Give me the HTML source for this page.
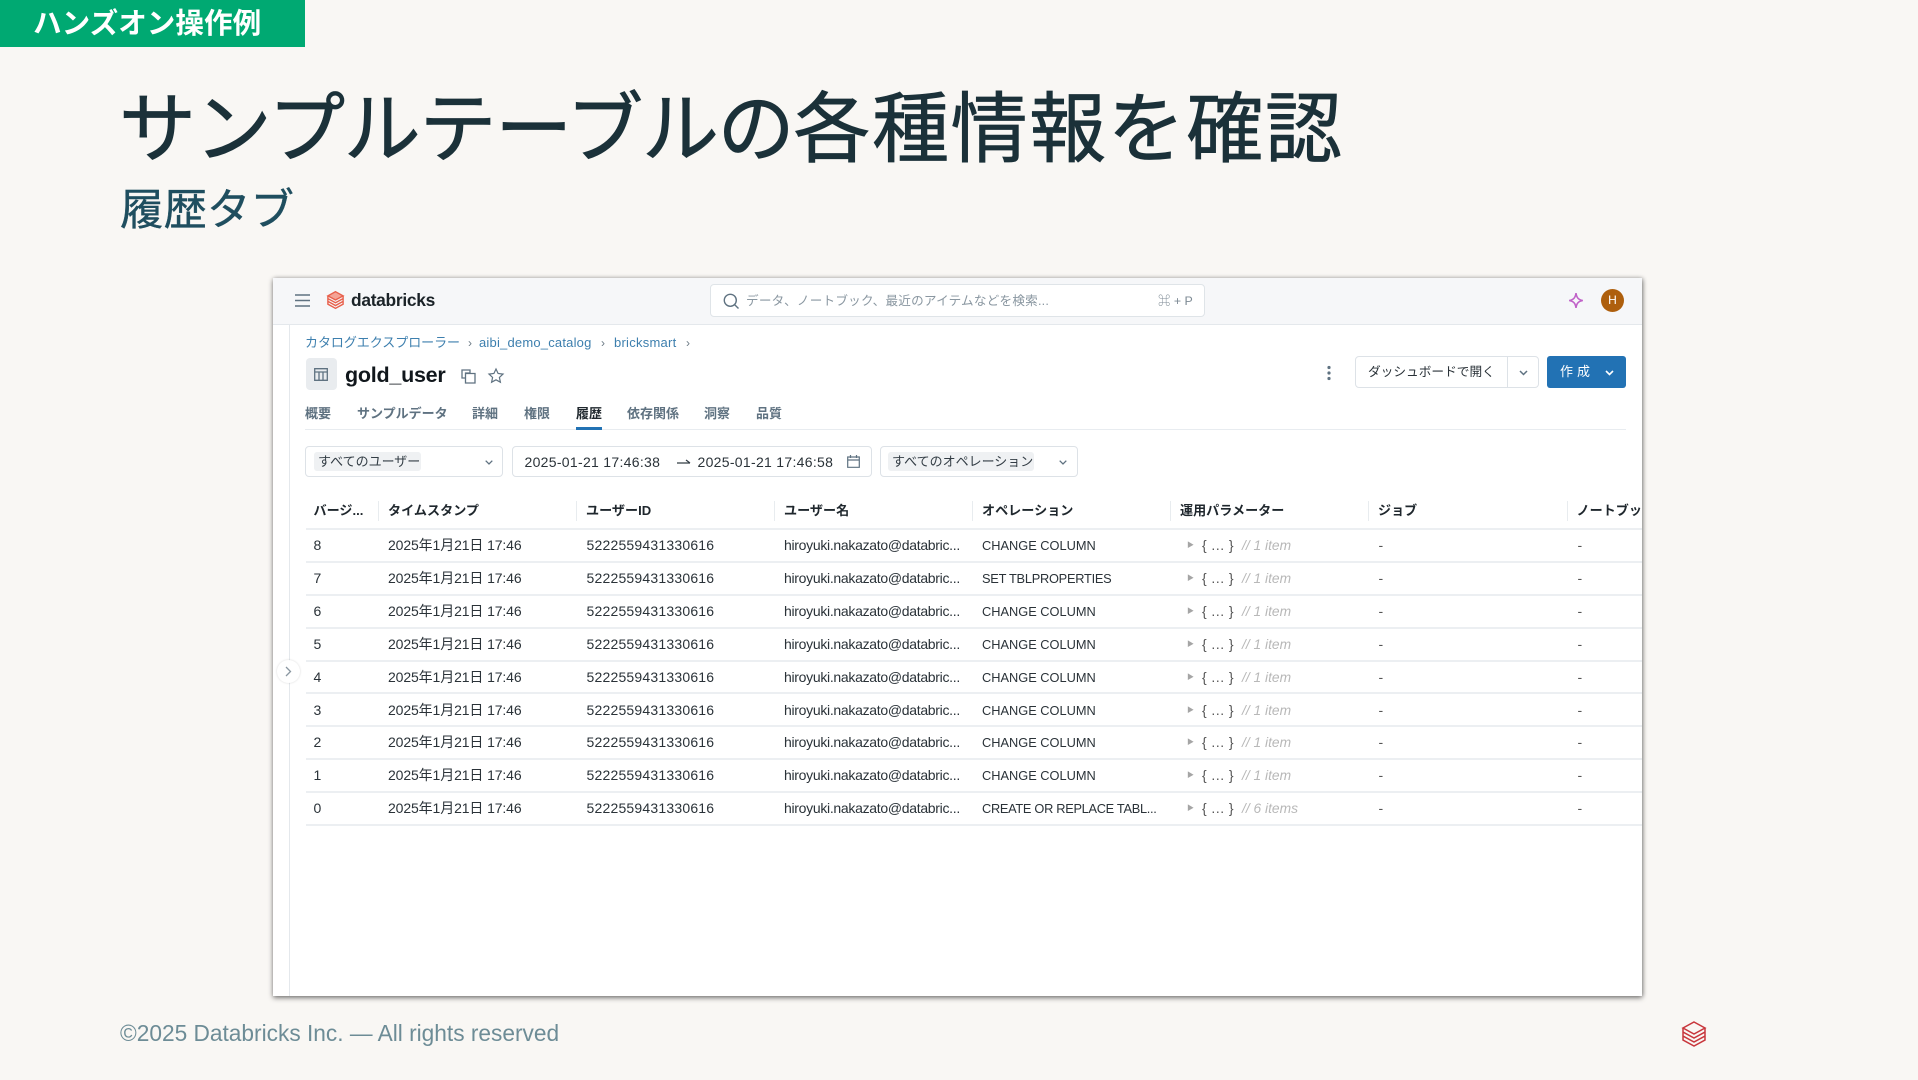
<!DOCTYPE html>
<html lang="ja">
<head>
<meta charset="utf-8">
<title>サンプルテーブルの各種情報を確認</title>
<style>
html,body{margin:0;padding:0;width:1918px;height:1080px;overflow:hidden;background:#f9f7f4;font-family:"Liberation Sans","Noto Sans CJK JP",sans-serif}
.t{position:absolute;white-space:nowrap}
#banner{position:absolute;left:0;top:0;width:305px;height:47px;background:#00a972}
#banner span{position:absolute;left:33px;top:4px;font-size:28.6px;line-height:40px;font-weight:700;color:#fff}
#title{left:119px;top:75px;font-size:77px;line-height:110px;color:#1b3139;-webkit-text-stroke:.8px #1b3139}
#title .ka{letter-spacing:-1.3px}
#title .kj{letter-spacing:1.6px}
#sub{left:120px;top:179px;font-size:43.5px;line-height:64px;color:#1f4e5f;-webkit-text-stroke:.4px #1f4e5f}
#foot{left:120px;top:1018px;font-size:22.7px;line-height:30px;color:#6d8c96}
#panel{position:absolute;left:273px;top:278px;width:1369px;height:718px;background:#fff;overflow:hidden;box-shadow:0 2px 5px rgba(0,0,0,.45),1px 0 4px rgba(0,0,0,.25);color:#11171c}
#wrap{position:absolute;left:0;top:0;width:1369px;height:718px;filter:blur(.35px)}
#top{position:absolute;left:0;top:0;width:1369px;height:46px;background:#f6f7f9;border-bottom:1px solid #e4e8ec}
#side{position:absolute;left:16px;top:47px;width:1px;height:671px;background:#e4e8ec}
#search{position:absolute;left:437px;top:6px;width:493px;height:31px;background:#fff;border:1px solid #dfe4e8;border-radius:4px}
.box{position:absolute;background:#fff;border:1px solid #dde2e7;border-radius:4px;box-sizing:border-box}
.tag{position:absolute;background:#eff1f3;border-radius:3px;font-size:13px;line-height:19px;color:#333d45;padding:0 4px;white-space:nowrap;box-sizing:border-box}
.bc{font-size:13px;line-height:18px;top:56px;color:#3d7fae}
.sep{font-size:12px;line-height:18px;top:56px;color:#6b7a85}
.tab{font-size:13px;line-height:18px;top:127px;color:#5f7281;font-weight:700}
.h{font-size:13.1px;line-height:18px;font-weight:700;top:130px;color:#1f272d}
.hs{position:absolute;top:122px;width:1px;height:20px;background:#e8ecef}
.r{position:absolute;left:33px;width:1336px;height:32.9px;border-bottom:2px solid #eceff2;box-sizing:border-box;font-size:14px;line-height:31px;color:#2a3238}
.r span{position:absolute;white-space:nowrap;top:0}
.a{left:7.5px}.b{left:82px;letter-spacing:-.12px}.c{left:280.5px;letter-spacing:.2px}.d{left:478px;letter-spacing:-.3px}.e{left:676px;font-size:12.8px}
.f{left:881px;color:#a5a5a5;font-size:7px}.g{left:896px;color:#555;letter-spacing:.1px}.i{left:936px;color:#b8b8b8;font-style:italic;font-size:13.8px}
.j{left:1072.5px;color:#555}.k{left:1271.5px;color:#555}
svg{position:absolute;overflow:visible}
</style>
</head>
<body>
<div id="banner"><span>ハンズオン操作例</span></div>
<div class="t" id="title"><span class="ka">サンプルテーブルの</span><span class="kj">各種情報を確認</span></div>
<div class="t" id="sub">履歴タブ</div>

<div id="panel"><div id="wrap">
  <div id="top"></div>
  <div id="side"></div>

  <svg style="left:22px;top:16px" width="15" height="13" viewBox="0 0 15 13" fill="none" stroke="#5f7281" stroke-width="1.4"><path d="M0 1h15M0 6.5h15M0 12h15"/></svg>
  <svg style="left:54px;top:13px" width="17" height="18" viewBox="0 0 24 26" fill="none" stroke="#e8604c" stroke-width="2"><path d="M12 1 23 7 12 13 1 7Z" fill="#f4a396"/><path d="M1 7v4l11 6 11-6V7M1 11v4l11 6 11-6v-4M1 15v4l11 6 11-6v-4"/></svg>
  <div class="t" style="left:78px;top:11px;font-size:17.4px;line-height:22px;font-weight:700;color:#1b2328;letter-spacing:-.3px">databricks</div>

  <div id="search"></div>
  <svg style="left:450px;top:15px" width="16" height="16" viewBox="0 0 16 16" fill="none" stroke="#5f7281" stroke-width="1.4"><circle cx="7.3" cy="7.3" r="6"/><path d="M11.6 11.6 15.5 15.5"/></svg>
  <div class="t" style="left:473px;top:14px;font-size:12.6px;line-height:18px;color:#8a97a1;letter-spacing:.22px">データ、ノートブック、最近のアイテムなどを検索...</div>
  <div class="t" style="left:885px;top:14px;font-size:12.4px;line-height:18px;color:#7d8a94">⌘ + P</div>

  <svg style="left:1295px;top:14px" width="16" height="17" viewBox="0 0 14 15" fill="none" stroke="#c062c8" stroke-width="1.4"><path d="M7 1C7.6 5 9 6.8 13 7.5 9 8.2 7.6 10 7 14 6.4 10 5 8.2 1 7.5 5 6.800 6.400 5 7 1Z"/></svg>
  <div class="t" style="left:1328px;top:11px;width:23px;height:23px;border-radius:50%;background:#ae5f0d;color:#fff;font-size:12px;line-height:23px;text-align:center">H</div>

  <div class="t bc" style="left:32px;letter-spacing:-.05px">カタログエクスプローラー</div>
  <div class="t sep" style="left:195px">›</div>
  <div class="t bc" style="left:206px;letter-spacing:.2px">aibi_demo_catalog</div>
  <div class="t sep" style="left:328px">›</div>
  <div class="t bc" style="left:341px;letter-spacing:.25px">bricksmart</div>
  <div class="t sep" style="left:413px">›</div>

  <div class="t" style="left:33px;top:80px;width:31px;height:32px;background:#e9ecef;border-radius:4px"></div>
  <svg style="left:41px;top:90px" width="14" height="13" viewBox="0 0 14 13" fill="none" stroke="#5f7281" stroke-width="1.3"><path d="M.7.7h12.600v11.600H.7ZM.7 4h12.600M5 4v8.300M9 4v8.300"/></svg>
  <div class="t" style="left:72px;top:82px;font-size:21.5px;line-height:30px;font-weight:700;color:#11171c;letter-spacing:-.25px">gold_user</div>
  <svg style="left:188px;top:91px" width="15" height="15" viewBox="0 0 15 15" fill="none" stroke="#5f7281" stroke-width="1.3"><path d="M1 1h8v3H4.500v5H1ZM4.500 4.500h9.500v9.500H4.500Z"/></svg>
  <svg style="left:215px;top:90px" width="16" height="15" viewBox="0 0 16 15" fill="none" stroke="#5f7281" stroke-width="1.2"><path d="M8 1l2.100 4.500 4.900.6-3.600 3.300 1 4.800L8 11.800 3.600 14.200l1-4.800L1 6.100l4.900-.6Z"/></svg>

  <svg style="left:1053px;top:87px" width="6" height="16" viewBox="0 0 6 16" fill="#5f7281"><circle cx="3" cy="2.500" r="1.600"/><circle cx="3" cy="8" r="1.600"/><circle cx="3" cy="13.500" r="1.600"/></svg>
  <div class="box" style="left:1082px;top:78px;width:184px;height:32px"></div>
  <div class="t" style="left:1234px;top:79px;width:1px;height:30px;background:#dde2e7"></div>
  <div class="t" style="left:1095px;top:85px;font-size:12.7px;line-height:18px;color:#2a3238">ダッシュボードで開く</div>
  <svg style="left:1246px;top:92px" width="9" height="6" viewBox="0 0 9 6" fill="none" stroke="#5f7281" stroke-width="1.5"><path d="M1 1l3.500 3.500L8 1"/></svg>
  <div class="t" style="left:1274px;top:78px;width:79px;height:32px;background:#2272b4;border-radius:3px"></div>
  <div class="t" style="left:1287px;top:85px;font-size:13px;line-height:18px;color:#fff;letter-spacing:4px">作成</div>
  <svg style="left:1332px;top:92px" width="9" height="6" viewBox="0 0 9 6" fill="none" stroke="#fff" stroke-width="1.6"><path d="M1 1l3.500 3.500L8 1"/></svg>

  <div class="t tab" style="left:32px">概要</div>
  <div class="t tab" style="left:84px">サンプルデータ</div>
  <div class="t tab" style="left:199px">詳細</div>
  <div class="t tab" style="left:251px">権限</div>
  <div class="t tab" style="left:303px;color:#1f272d">履歴</div>
  <div class="t tab" style="left:354px">依存関係</div>
  <div class="t tab" style="left:431px">洞察</div>
  <div class="t tab" style="left:483px">品質</div>
  <div class="t" style="left:32px;top:151px;width:1321px;height:1px;background:#e8ecf0"></div>
  <div class="t" style="left:302.500px;top:149px;width:26px;height:3px;background:#2272b4"></div>

  <div class="box" style="left:32px;top:168px;width:198px;height:31px"></div>
  <div class="tag" style="left:41px;top:174px;width:107px">すべてのユーザー</div>
  <svg style="left:212px;top:182px" width="8" height="5" viewBox="0 0 8 5" fill="none" stroke="#5f7281" stroke-width="1.300"><path d="M.7.7 4 4 7.300.7"/></svg>

  <div class="box" style="left:239px;top:168px;width:360px;height:31px"></div>
  <div class="t" style="left:251.500px;top:175px;font-size:14px;line-height:18px;color:#2a3238;letter-spacing:.3px">2025-01-21 17:46:38</div>
  <svg style="left:404px;top:181px" width="14" height="6" viewBox="0 0 14 6" fill="none" stroke="#333d45" stroke-width="1.200"><path d="M0 4h13M9 1l4 3"/></svg>
  <div class="t" style="left:424.500px;top:175px;font-size:14px;line-height:18px;color:#2a3238;letter-spacing:.3px">2025-01-21 17:46:58</div>
  <svg style="left:574px;top:177px" width="13" height="13" viewBox="0 0 13 13" fill="none" stroke="#5f7281" stroke-width="1.200"><path d="M.7 2h11.600v10.300H.7ZM.7 5h11.600M3.500 0v3M9.500 0v3"/></svg>

  <div class="box" style="left:607px;top:168px;width:198px;height:31px"></div>
  <div class="tag" style="left:615px;top:174px;width:146px">すべてのオペレーション</div>
  <svg style="left:786px;top:182px" width="8" height="5" viewBox="0 0 8 5" fill="none" stroke="#5f7281" stroke-width="1.300"><path d="M.7.7 4 4 7.300.7"/></svg>

  <div class="t h" style="left:40.500px;top:224px">バージ...</div>
  <div class="t h" style="left:115px;top:224px">タイムスタンプ</div>
  <div class="t h" style="left:313px;top:224px">ユーザーID</div>
  <div class="t h" style="left:511px;top:224px">ユーザー名</div>
  <div class="t h" style="left:709px;top:224px">オペレーション</div>
  <div class="t h" style="left:907px;top:224px">運用パラメーター</div>
  <div class="t h" style="left:1105px;top:224px">ジョブ</div>
  <div class="t h" style="left:1303.500px;top:224px">ノートブック</div>
  <div class="hs" style="left:105px;top:223px"></div>
  <div class="hs" style="left:303px;top:223px"></div>
  <div class="hs" style="left:501px;top:223px"></div>
  <div class="hs" style="left:699px;top:223px"></div>
  <div class="hs" style="left:897px;top:223px"></div>
  <div class="hs" style="left:1095px;top:223px"></div>
  <div class="hs" style="left:1293.500px;top:223px"></div>
  <div class="t" style="left:33px;top:250px;width:1336px;height:2px;background:#eceff2"></div>

  <div class="r" style="top:252px"><span class="a">8</span><span class="b">2025年1月21日 17:46</span><span class="c">5222559431330616</span><span class="d">hiroyuki.nakazato@databric...</span><span class="e">CHANGE COLUMN</span><span class="f">▶</span><span class="g">{ … }</span><span class="i">// 1 item</span><span class="j">-</span><span class="k">-</span></div>
  <div class="r" style="top:284.900px"><span class="a">7</span><span class="b">2025年1月21日 17:46</span><span class="c">5222559431330616</span><span class="d">hiroyuki.nakazato@databric...</span><span class="e" style="letter-spacing:-.25px">SET TBLPROPERTIES</span><span class="f">▶</span><span class="g">{ … }</span><span class="i">// 1 item</span><span class="j">-</span><span class="k">-</span></div>
  <div class="r" style="top:317.800px"><span class="a">6</span><span class="b">2025年1月21日 17:46</span><span class="c">5222559431330616</span><span class="d">hiroyuki.nakazato@databric...</span><span class="e">CHANGE COLUMN</span><span class="f">▶</span><span class="g">{ … }</span><span class="i">// 1 item</span><span class="j">-</span><span class="k">-</span></div>
  <div class="r" style="top:350.700px"><span class="a">5</span><span class="b">2025年1月21日 17:46</span><span class="c">5222559431330616</span><span class="d">hiroyuki.nakazato@databric...</span><span class="e">CHANGE COLUMN</span><span class="f">▶</span><span class="g">{ … }</span><span class="i">// 1 item</span><span class="j">-</span><span class="k">-</span></div>
  <div class="r" style="top:383.600px"><span class="a">4</span><span class="b">2025年1月21日 17:46</span><span class="c">5222559431330616</span><span class="d">hiroyuki.nakazato@databric...</span><span class="e">CHANGE COLUMN</span><span class="f">▶</span><span class="g">{ … }</span><span class="i">// 1 item</span><span class="j">-</span><span class="k">-</span></div>
  <div class="r" style="top:416.500px"><span class="a">3</span><span class="b">2025年1月21日 17:46</span><span class="c">5222559431330616</span><span class="d">hiroyuki.nakazato@databric...</span><span class="e">CHANGE COLUMN</span><span class="f">▶</span><span class="g">{ … }</span><span class="i">// 1 item</span><span class="j">-</span><span class="k">-</span></div>
  <div class="r" style="top:449.400px"><span class="a">2</span><span class="b">2025年1月21日 17:46</span><span class="c">5222559431330616</span><span class="d">hiroyuki.nakazato@databric...</span><span class="e">CHANGE COLUMN</span><span class="f">▶</span><span class="g">{ … }</span><span class="i">// 1 item</span><span class="j">-</span><span class="k">-</span></div>
  <div class="r" style="top:482.300px"><span class="a">1</span><span class="b">2025年1月21日 17:46</span><span class="c">5222559431330616</span><span class="d">hiroyuki.nakazato@databric...</span><span class="e">CHANGE COLUMN</span><span class="f">▶</span><span class="g">{ … }</span><span class="i">// 1 item</span><span class="j">-</span><span class="k">-</span></div>
  <div class="r" style="top:515.200px"><span class="a">0</span><span class="b">2025年1月21日 17:46</span><span class="c">5222559431330616</span><span class="d">hiroyuki.nakazato@databric...</span><span class="e" style="letter-spacing:-.3px">CREATE OR REPLACE TABL...</span><span class="f">▶</span><span class="g">{ … }</span><span class="i">// 6 items</span><span class="j">-</span><span class="k">-</span></div>

  <div class="t" style="left:4px;top:382px;width:23px;height:23px;border-radius:50%;background:#fff;box-shadow:0 0 2px rgba(0,0,0,.16)"></div>
  <svg style="left:12px;top:388px" width="7" height="11" viewBox="0 0 7 11" fill="none" stroke="#8a97a1" stroke-width="1.300"><path d="M1 1l4.500 4.500L1 10"/></svg>
</div></div>

<div class="t" id="foot">©2025 Databricks Inc. — All rights reserved</div>
<svg style="left:1682px;top:1021px" width="24" height="26" viewBox="0 0 24 26" fill="none" stroke="#c8363c" stroke-width="1.500"><path d="M12 1 23 7 12 13 1 7Z"/><path d="M1 7v4l11 6 11-6V7M1 11v4l11 6 11-6v-4M1 15v4l11 6 11-6v-4"/></svg>
</body>
</html>
